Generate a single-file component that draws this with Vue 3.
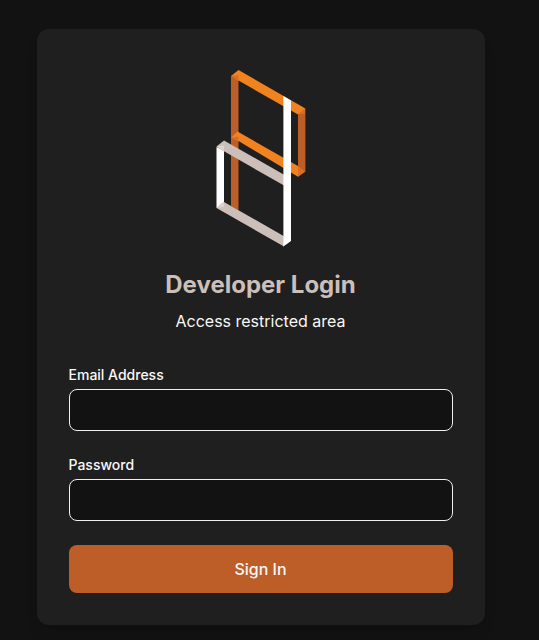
<script setup>
import { ref } from 'vue'

const email = ref('')
const password = ref('')
</script>

<template>
  <main class="page">
    <form class="card" @submit.prevent>
      <svg class="logo" viewBox="210 61 102 192" aria-hidden="true">
        <path fill="#bd5e28" d="M231 76l7.500 4v130.400l-7.500-4.300z" />
        <path fill="#bd5e28" d="M298 113l7.400-4.500v63.200l-7.400 5z" />
        <path fill="#f08220" d="M231 76l7.500-6L305.400 108.600l-7.400 6-59.500-34z" />
        <path fill="#f08220" d="M231 137.500l6.500-6L298 166v10.700L238.500 141z" />
        <path fill="#d87024" d="M231 76l7.500-1v6zM298 166l7 5.500-7 5.200zM298 114.500l7-5.900v5zM231 137.500l7.500-1v5z" />
        <path fill="#ccbfba" d="M216.500 146.500l7.500-6 60.500 34.500v10.800L224 151.300z" />
        <path fill="#ccbfba" d="M216.500 208l7.500-6 60 34.200v10.300z" />
        <path fill="#fff" d="M216.500 147l7.500 4v51l-7.500 6z" />
        <path fill="#ddd3cf" d="M216.500 146.500l7.500-1v6zM216.500 208l5-5 2.500-1v5z" />
        <path fill="#fff" d="M283.400 96l7.600 4.600V241l-7.600 5.500z" />
      </svg>
      <h1 class="title">Developer Login</h1>
      <p class="subtitle">Access restricted area</p>
      <div class="field">
        <label for="email">Email Address</label>
        <input id="email" v-model="email" type="email" />
      </div>
      <div class="field">
        <label for="password">Password</label>
        <input id="password" v-model="password" type="password" />
      </div>
      <button type="submit">Sign In</button>
    </form>
  </main>
</template>

<style>
body {
  background: #121212;
}
</style>

<style scoped>
.page {
  box-sizing: border-box;
  height: 640px;
  padding: 29px 54px 15px 37px;
  overflow: hidden;
  font-family: Inter, sans-serif;
  color: #f8f8f8;
}
.card {
  box-sizing: border-box;
  display: flex;
  flex-direction: column;
  width: 448px;
  height: 596px;
  padding: 32px;
  border-radius: 12px;
  background: #1f1f1f;
  box-shadow: 0 10px 15px -3px rgba(0, 0, 0, 0.1), 0 4px 6px -4px rgba(0, 0, 0, 0.1);
}
.logo {
  align-self: center;
  width: 102px;
  height: 192px;
}
.title {
  margin: 16px 0 0;
  padding-right: 1px;
  font-size: 24px;
  line-height: 32px;
  font-weight: 700;
  text-align: center;
  color: #ccbfba;
}
.subtitle {
  margin: 8px 0 32px;
  padding-right: 1px;
  font-size: 16px;
  line-height: 24px;
  text-align: center;
}
.field {
  display: flex;
  flex-direction: column;
  gap: 4px;
  margin-bottom: 24px;
}
label {
  margin-left: -0.5px;
  font-size: 14px;
  line-height: 20px;
  font-weight: 500;
}
input {
  box-sizing: border-box;
  width: 100%;
  height: 42px;
  padding: 8px 16px;
  border: 1px solid #f0f0f0;
  border-radius: 8px;
  outline: none;
  background: #121212;
  color: inherit;
  font: 16px/24px Inter, sans-serif;
}
button {
  height: 48px;
  padding: 0 1px 0 0;
  border: 0;
  border-radius: 8px;
  background: #bd5e28;
  color: #f8f8f8;
  font: 500 16px/24px Inter, sans-serif;
}
</style>
